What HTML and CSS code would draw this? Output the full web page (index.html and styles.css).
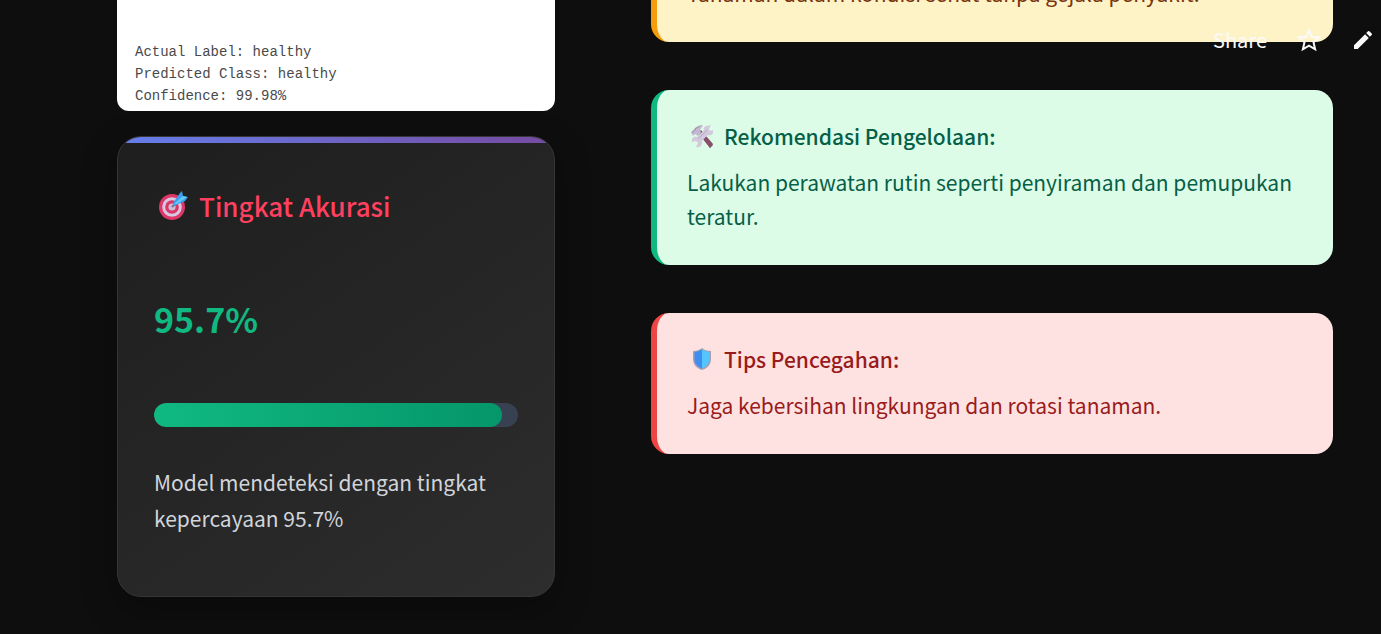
FILE: index.html
```
<!DOCTYPE html>
<html lang="id">
<head>
<meta charset="utf-8">
<title>Tingkat Akurasi</title>
<link rel="stylesheet" href="styles.css">
</head>
<body>
<nav class="toolbar" aria-label="Aplikasi">
  <button class="tool" type="button">Share</button>
  <button class="tool" type="button" aria-label="Favorit">
    <svg class="tool-icon" viewBox="0 0 24 24"><path d="M12 2.200l2.700 6.600 7.300.6-5.500 4.800 1.600 7.100-6.100-3.700L5.900 21.300l1.600-7.100L2 9.400l7.300-.6z" fill="none" stroke="currentColor" stroke-width="2"/></svg>
  </button>
  <button class="tool" type="button" aria-label="Edit">
    <svg class="tool-icon" viewBox="0 0 24 24"><path d="M3 17.300V21h3.700L17.800 9.900l-3.700-3.700zM20.700 7a1 1 0 0 0 0-1.400l-2.300-2.300a1 1 0 0 0-1.400 0l-1.800 1.800 3.700 3.700z" fill="currentColor"/></svg>
  </button>
</nav>
<main class="page">
  <div class="column">
    <figure class="sample">
      <figcaption>Actual Label: healthy<br>Predicted Class: healthy<br>Confidence: 99.98%</figcaption>
    </figure>
    <section class="accuracy">
      <h2 class="accuracy-title">
        <svg class="target" viewBox="0 0 30 30"><circle cx="13" cy="16" r="13" fill="#dd3768"/><circle cx="13" cy="16" r="9.800" fill="#d6c8e1"/><circle cx="13" cy="16" r="6.800" fill="#dc3567"/><circle cx="13" cy="16" r="3.600" fill="#d0bdd5"/><path d="M13 16l6-6" stroke="#806e91" stroke-width="2"/><path d="M14 12l7-10 2-2 1 5 5 1-3 4-11 5z" fill="#3c9fed"/><path d="M15 13l9-8 4 1-10 7z" fill="#60c8ff"/></svg>
        Tingkat Akurasi
      </h2>
      <p class="score">95.7%</p>
      <div class="bar" role="progressbar" aria-label="Tingkat Akurasi" aria-valuenow="95.7" aria-valuemin="0" aria-valuemax="100"><div class="bar-fill" style="width: 95.7%"></div></div>
      <p class="summary">Model mendeteksi dengan tingkat kepercayaan 95.7%</p>
    </section>
  </div>
  <div class="column notes">
    <section class="note note-yellow">
      <p>Tanaman dalam kondisi sehat tanpa gejala penyakit.</p>
    </section>
    <section class="note note-green">
      <h3>
        <svg class="note-icon" viewBox="0 0 24 24"><path d="M8 9l3-3 12 14-3 4z" fill="#86506c"/><path d="M1 8l5-5 5-2 2 0-3 5 1 3-3 3-3-2-2 2z" fill="#c4b7d1"/><path d="M2 9l4-4M5 5l5-3" stroke="#9f91ad"/><path d="M17 2l4-1-2 4 1 2 3-1c1 4-2 6-5 5l-6 6c1 4-2 7-6 6l2-4-2-2-4 1c-1-4 2-6 5-5l7-7c-1-2 1-4 3-4z" fill="#d3c9dd"/><path d="M8 15l9-9" stroke="#b7a7c4"/><path d="M14 15l2-2 7 8-3 3z" fill="#86506c"/></svg>
        Rekomendasi Pengelolaan:
      </h3>
      <p>Lakukan perawatan rutin seperti penyiraman dan pemupukan teratur.</p>
    </section>
    <section class="note note-red">
      <h3>
        <svg class="note-icon" viewBox="0 0 24 24"><path d="M12 1c2 2 5 3 9 3v8c0 5-3 9-9 11-6-2-9-6-9-11V4c4 0 7-1 9-3z" fill="#a5a0b4"/><path d="M12 2.500L4.500 5.500V12c0 4 2.500 7.500 7.500 9.500z" fill="#3d8df2"/><path d="M12 2.500l7.500 3V12c0 4-2.500 7.500-7.500 9.500z" fill="#55c5fd"/></svg>
        Tips Pencegahan:
      </h3>
      <p>Jaga kebersihan lingkungan dan rotasi tanaman.</p>
    </section>
  </div>
</main>
</body>
</html>
```
FILE: styles.css
```
* { box-sizing: border-box; }
body {
  margin: 0;
  background: #0e0e0e;
  color: #d1d5db;
  font-family: "Noto Sans CJK SC", "Noto Sans", sans-serif;
  font-size: 21px;
  overflow: hidden;
}
h2, h3, p, figure { margin: 0; }
svg { display: block; flex: none; }
.toolbar {
  position: absolute;
  top: 24px;
  right: 6px;
  display: flex;
  align-items: center;
  gap: 30px;
}
.tool {
  padding: 0;
  border: 0;
  background: none;
  color: #fafafa;
  font: inherit;
  font-size: 20px;
  line-height: 32px;
}
.tool-icon { width: 24px; height: 24px; }
.page {
  display: grid;
  grid-template-columns: 438fr 682fr;
  gap: 96px;
  align-items: start;
  padding: 0 48px 37px 117px;
}
.column { display: flex; flex-direction: column; gap: 25px; }
.sample {
  padding: 41px 18px 4px;
  border-radius: 0 0 12px 12px;
  background: #fff;
  color: #4a4a4a;
  font: 14px/22px "Liberation Mono", monospace;
}
.accuracy {
  position: relative;
  overflow: hidden;
  padding: 50px 36px 60px;
  border: 1px solid #363636;
  border-radius: 24px;
  background: linear-gradient(145deg, #1e1e1e, #2d2d2d);
  box-shadow: 0 12px 36px rgba(0, 0, 0, 0.3);
}
.accuracy::before {
  content: "";
  position: absolute;
  inset: 0 0 auto;
  height: 6px;
  background: linear-gradient(90deg, #667eea, #764ba2);
}
.accuracy-title {
  display: flex;
  align-items: center;
  gap: 10px;
  padding-left: 5px;
  color: #ff4060;
  font-size: 26px;
  font-weight: 500;
  line-height: 38px;
}
.target { width: 30px; height: 30px; }
.score {
  margin-top: 65px;
  color: #10b981;
  font-size: 34px;
  font-weight: 700;
  line-height: 58px;
}
.bar {
  height: 24px;
  margin: 55px 0 37px;
  border-radius: 12px;
  background: #374151;
  overflow: hidden;
}
.bar-fill {
  height: 100%;
  border-radius: 12px;
  background: linear-gradient(90deg, #10b981, #059669);
}
.summary { line-height: 36px; }
.notes { gap: 48px; }
.note {
  display: flex;
  flex-direction: column;
  gap: 12px;
  padding: 29px 30px 32px;
  border-left: 6px solid;
  border-radius: 18px;
  line-height: 34px;
}
.note h3 {
  display: flex;
  align-items: center;
  gap: 10px;
  padding-left: 3px;
  font-size: 21px;
  font-weight: 500;
}
.note-icon { width: 24px; height: 24px; }
.note-yellow { margin-top: -53px; background: #fef3c7; border-color: #f59e0b; color: #78350f; }
.note-green { background: #dcfce7; border-color: #10b981; color: #065f46; }
.note-red { background: #fee2e2; border-color: #ef4444; color: #991b1b; }
```
